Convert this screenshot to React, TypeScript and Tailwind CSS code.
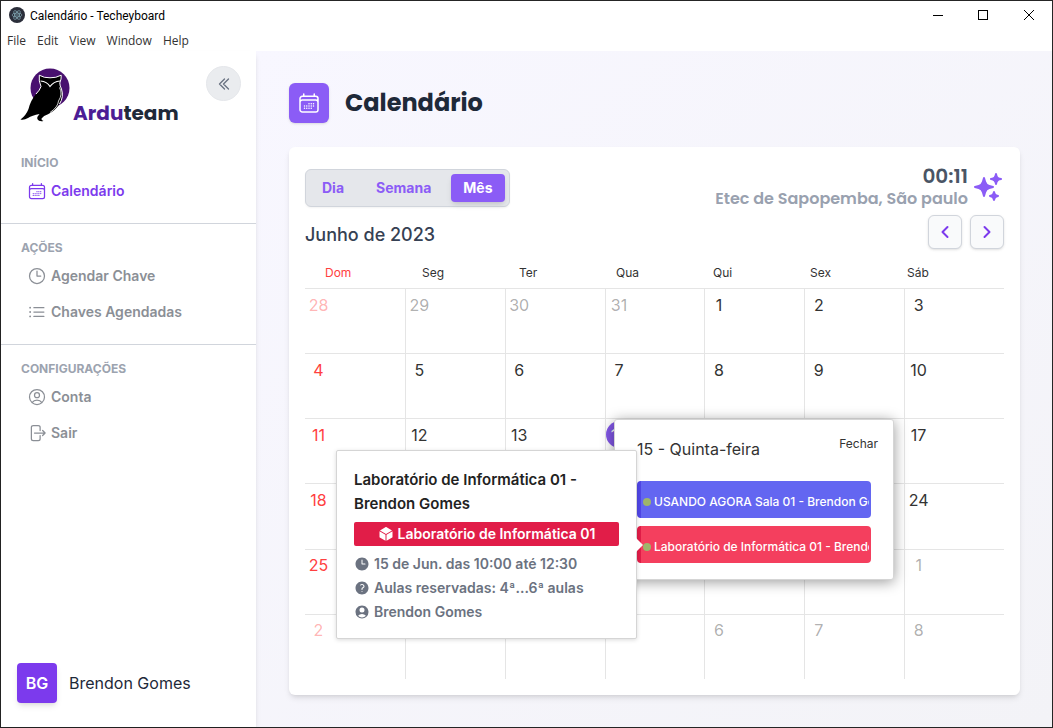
import React from "react";
import {
  HiClock,
  HiCube,
  HiOutlineArrowRightOnRectangle,
  HiOutlineCalendarDays,
  HiOutlineChevronDoubleLeft,
  HiOutlineChevronLeft,
  HiOutlineChevronRight,
  HiOutlineClock,
  HiOutlineListBullet,
  HiOutlineUserCircle,
  HiQuestionMarkCircle,
  HiSparkles,
  HiUserCircle,
} from "react-icons/hi2";

const display = "font-[Poppins,Inter,sans-serif]";

function Owl() {
  return (
    <svg viewBox="0 0 52 56" className="h-14 w-13" aria-hidden="true">
      <circle cx="30" cy="21" r="19.500" fill="#48106f" />
      <path
        d="M19.300 8.200Q24 11 30 10.800Q36 11 41.200 8.200Q41.500 12 39.800 16Q39.800 19 41.500 22Q43.500 30 39.500 37Q35 44 28 47.200Q23.500 48.500 21.500 51.500Q21 53 23.500 54Q19 55 17.300 52Q17 49.500 19.500 47Q12 48.500 8 51Q4 53.500 .5 52.500Q6 48.500 8.500 42Q10.500 33.500 16 27Q20 23 21 19.500Q18.500 14 19.300 8.200Z"
        fill="#000"
      />
      <path
        d="M19.300 8.200Q24 11 30 10.800Q36 11 41.200 8.200Q41.500 12 39.800 16Q39.800 19 41.500 22Q44 30 39.500 37M19.300 8.200Q18.500 14 21 19.500Q20 23 16 27"
        fill="none"
        stroke="#fff"
        strokeWidth="1"
      />
      <path d="M20.500 14Q27 14.500 30 19.500Q33.500 14.500 40 14" fill="none" stroke="#fff" strokeWidth="1.200" />
      <path d="M39.500 20.500Q43 27 38.500 34Q38 40 30 45.500" fill="none" stroke="#fff" strokeWidth=".800" />
    </svg>
  );
}

function AppIcon() {
  return (
    <svg viewBox="0 0 16 16" className="size-4" aria-hidden="true">
      <circle cx="8" cy="8" r="8" fill="#2b2e3a" />
      <g fill="none" stroke="#8fb9c4" strokeWidth="0.600">
        <ellipse cx="8" cy="8" rx="5" ry="2" />
        <ellipse cx="8" cy="8" rx="5" ry="2" transform="rotate(60 8 8)" />
        <ellipse cx="8" cy="8" rx="5" ry="2" transform="rotate(120 8 8)" />
      </g>
      <circle cx="8" cy="8" r="0.700" fill="#8fb9c4" />
    </svg>
  );
}

function TitleBar() {
  return (
    <header className="bg-white text-xs text-black">
      <div className="flex h-7 items-center justify-between pl-2">
        <div className="flex items-center gap-[5px]">
          <AppIcon />
          <span className="pt-0.5 font-[Roboto,sans-serif]">Calendário - Techeyboard</span>
        </div>
        <div className="flex">
          <button aria-label="Minimizar" className="flex h-7 w-[45px] items-center justify-center">
            <svg viewBox="0 0 10 10" className="size-2.5" shapeRendering="crispEdges"><path d="M0 5.500H10" stroke="#000" /></svg>
          </button>
          <button aria-label="Maximizar" className="flex h-7 w-[45px] items-center justify-center">
            <svg viewBox="0 0 10 10" className="size-2.5" shapeRendering="crispEdges"><path d="M.5 .5H9.500V9.500H.5Z" fill="none" stroke="#000" /></svg>
          </button>
          <button aria-label="Fechar janela" className="flex h-7 w-[47px] items-center justify-center">
            <svg viewBox="0 0 10 10" className="size-2.5"><path d="M0 0L10 10M10 0L0 10" stroke="#000" /></svg>
          </button>
        </div>
      </div>
      <nav className="flex h-[22px] items-center gap-[11px] pt-0.5 pl-1.5 font-['Open_Sans',sans-serif] text-[#333]">
        {["File", "Edit", "View", "Window", "Help"].map((m) => (
          <button key={m}>{m}</button>
        ))}
      </nav>
    </header>
  );
}

type Item = { label: string; icon: React.ReactNode; active?: boolean };

function Section({ title, items }: { title: string; items: Item[] }) {
  return (
    <section className="border-b border-gray-300 pt-4 pb-3.5 pl-5 last-of-type:border-0">
      <h2 className="text-xs leading-4 font-bold text-[#9ca3af]">{title}</h2>
      <ul className="mt-0.5 pl-1.5">
        {items.map((i) => (
          <li key={i.label}>
            <a
              href="#"
              className={
                "flex h-9 items-center gap-1 text-sm leading-5 font-semibold " +
                (i.active ? "text-[#7c3aed]" : "text-[#8b8f96]")
              }
            >
              <span className="text-xl">{i.icon}</span>
              {i.label}
            </a>
          </li>
        ))}
      </ul>
    </section>
  );
}

function Sidebar() {
  return (
    <aside className="relative z-10 flex w-[255px] shrink-0 flex-col bg-white shadow-md">
      <div className="flex items-start justify-between pt-[15px] pr-[15px] pb-4 pl-[19px]">
        <div className="flex items-end gap-px pt-px">
          <Owl />
          <span className={display + " text-xl leading-5 font-bold text-gray-800"}>
            <span className="text-[#4c1d95]">Ardu</span>team
          </span>
        </div>
        <button aria-label="Recolher menu" className="flex size-[35px] items-center justify-center rounded-full border border-gray-200 bg-gray-200/80 text-gray-500">
          <HiOutlineChevronDoubleLeft className="size-4 stroke-2" />
        </button>
      </div>
      <Section title="INÍCIO" items={[{ label: "Calendário", icon: <HiOutlineCalendarDays />, active: true }]} />
      <Section
        title="AÇÕES"
        items={[
          { label: "Agendar Chave", icon: <HiOutlineClock /> },
          { label: "Chaves Agendadas", icon: <HiOutlineListBullet /> },
        ]}
      />
      <Section
        title="CONFIGURAÇÕES"
        items={[
          { label: "Conta", icon: <HiOutlineUserCircle /> },
          { label: "Sair", icon: <HiOutlineArrowRightOnRectangle /> },
        ]}
      />
      <div className="mt-auto flex items-center gap-3 p-4 pb-6 text-gray-800">
        <span className="flex size-10 items-center justify-center rounded bg-[#7c3aed] font-semibold text-white shadow-md">BG</span>
        <span>Brendon Gomes</span>
      </div>
    </aside>
  );
}

const weeks = [
  [28, 29, 30, 31, 1, 2, 3],
  [4, 5, 6, 7, 8, 9, 10],
  [11, 12, 13, 14, 15, 16, 17],
  [18, 19, 20, 21, 22, 23, 24],
  [25, 26, 27, 28, 29, 30, 1],
  [2, 3, 4, 5, 6, 7, 8],
];

function dayColor(week: number, col: number, n: number) {
  const outside = (week === 0 && n > 20) || (week >= 4 && n < 20);
  if (col === 0) return outside ? "text-[#ff4040]/40" : "text-[#ff4040]";
  return outside ? "text-[#333]/40" : "text-[#333]";
}

function Month() {
  return (
    <table className="block w-full">
      <thead className="block pr-5">
        <tr className="grid h-[31px] grid-cols-7 items-center">
          {["Dom", "Seg", "Ter", "Qua", "Qui", "Sex", "Sáb"].map((d, i) => (
            <th key={d} className={"p-0 pl-5 text-left text-xs font-normal " + (i === 0 ? "text-[#ff4040]" : "text-[#333]")}>
              {d}
            </th>
          ))}
        </tr>
      </thead>
      <tbody className="grid h-[391px] grid-rows-6">
        {weeks.map((w, r) => (
          <tr key={r} className="grid grid-cols-7">
            {w.map((n, c) => (
              <td key={c} className="border-t border-l border-[#e5e5e5] p-0 first:border-l-0">
                <span
                  className={
                    "mt-0.5 flex size-[27px] items-center justify-center rounded-full text-base " +
                    (r === 2 && c === 3 ? "bg-[#8257e6] text-white" : dayColor(r, c, n))
                  }
                >
                  {n}
                </span>
              </td>
            ))}
          </tr>
        ))}
      </tbody>
    </table>
  );
}

function EventRow({ label, tone }: { label: string; tone: string }) {
  return (
    <button className={"flex h-[37px] w-full items-center gap-[3px] overflow-hidden rounded border-l-4 pt-1 pr-0.5 pl-0.5 text-xs font-medium text-white " + tone}>
      <span className="size-2 shrink-0 rounded-full bg-[#9eb56b]" />
      <span className="overflow-hidden whitespace-nowrap">{label}</span>
    </button>
  );
}

function DayPopup() {
  return (
    <div className="absolute top-[272px] left-[325px] h-[161px] w-[280px] rounded-[3px] border border-[#d5d5d5] bg-white pt-3 pr-[15px] pl-[22px] shadow-[0_2px_14px_rgba(0,0,0,0.4)]">
      <div className="flex items-start justify-between text-[#333]">
        <span className="pt-[3px] pb-px text-base leading-7">15 - Quinta-feira</span>
        <button className="text-xs leading-6">Fechar</button>
      </div>
      <div className="flex flex-col gap-2 pt-[17px] pr-[7px]">
        <EventRow label="USANDO AGORA Sala 01 - Brendon Gomes" tone="border-[#4f46e5] bg-[#6366f1]" />
        <EventRow label="Laboratório de Informática 01 - Brendon Gomes" tone="border-[#e11d48] bg-[#f43f5e]" />
      </div>
    </div>
  );
}

function DetailPopup() {
  return (
    <div role="dialog" aria-label="Detalhes da reserva" className="absolute top-[303px] left-[47px] w-[301px] rounded-xs border border-[#d5d5d5] bg-white px-[17px] pt-[17px] pb-3.5 shadow-[0_1px_4px_rgba(0,0,0,0.15)]">
      <span className="absolute top-[87px] -right-[7px] size-0 border-y-[7px] border-l-[7px] border-y-transparent border-l-white" />
      <h3 className="text-[15px] leading-6 font-semibold text-[#222]">
        Laboratório de Informática 01 - Brendon Gomes
      </h3>
      <div className="mt-1.5 mb-1.5 flex h-6 items-center justify-center gap-1 rounded-xs bg-[#e11d48] text-sm font-semibold text-white">
        <HiCube className="size-4" />
        Laboratório de Informática 01
      </div>
      <ul className="text-sm font-semibold text-[#6b7280]">
        <li className="flex h-6 items-center gap-1"><HiClock className="size-4" />15 de Jun. das 10:00 até 12:30</li>
        <li className="flex h-6 items-center gap-1"><HiQuestionMarkCircle className="size-4" />Aulas reservadas: 4ª...6ª aulas</li>
        <li className="flex h-6 items-center gap-1"><HiUserCircle className="size-4" />Brendon Gomes</li>
      </ul>
    </div>
  );
}

function CalendarCard() {
  const nav = "flex size-[34px] items-center justify-center rounded-md border border-gray-300 bg-gray-50 text-[#7c3aed] shadow-sm";
  return (
    <section className="relative rounded-md bg-white p-4 shadow-md">
      <div className="flex items-start justify-between">
        <div className="pt-1.5">
          <div className="flex w-fit items-center rounded-md border border-gray-300 bg-gray-200 p-1 text-sm font-bold text-[#8b5cf6] shadow-xs">
            <button className="h-7 px-3">Dia</button>
            <button className="ml-2 h-7 px-3">Semana</button>
            <button className="ml-2 h-7 rounded bg-[#8b5cf6] px-3 text-white shadow-md">Mês</button>
          </div>
          <h2 className="mt-3.5 text-lg leading-7 font-medium text-gray-700">Junho de 2023</h2>
        </div>
        <div className="flex flex-col items-end">
          <div className="flex items-center gap-1">
            <div className={display + " pb-0.5 text-right"}>
              <p className="text-xl leading-[26px] font-semibold text-gray-600">00:11</p>
              <p className="text-base leading-5 font-semibold text-gray-400">Etec de Sapopemba, São paulo</p>
            </div>
            <HiSparkles className="size-8 text-[#8b5cf6]" />
          </div>
          <div className="mt-1 flex gap-2">
            <button aria-label="Mês anterior" className={nav}><HiOutlineChevronLeft className="size-4 stroke-[3]" /></button>
            <button aria-label="Próximo mês" className={nav}><HiOutlineChevronRight className="size-4 stroke-[3]" /></button>
          </div>
        </div>
      </div>
      <div className="mt-2"><Month /></div>
      <DayPopup />
      <DetailPopup />
    </section>
  );
}

export default function App() {
  return (
    <div className="flex min-h-screen flex-col border border-[#252525] bg-white font-[Inter,sans-serif]">
      <TitleBar />
      <div className="flex grow">
        <Sidebar />
        <main className="grow bg-linear-to-br from-[#f8f7ff] to-[#f3f3f7] pt-8 pr-8 pb-[31px] pl-[33px]">
          <div className="mb-6 flex items-center gap-4">
            <span className="flex size-10 items-center justify-center rounded-md bg-[#8b5cf6] text-white shadow-sm">
              <HiOutlineCalendarDays className="size-6" />
            </span>
            <h1 className={display + " text-2xl leading-8 font-bold text-gray-800"}>Calendário</h1>
          </div>
          <CalendarCard />
        </main>
      </div>
    </div>
  );
}
